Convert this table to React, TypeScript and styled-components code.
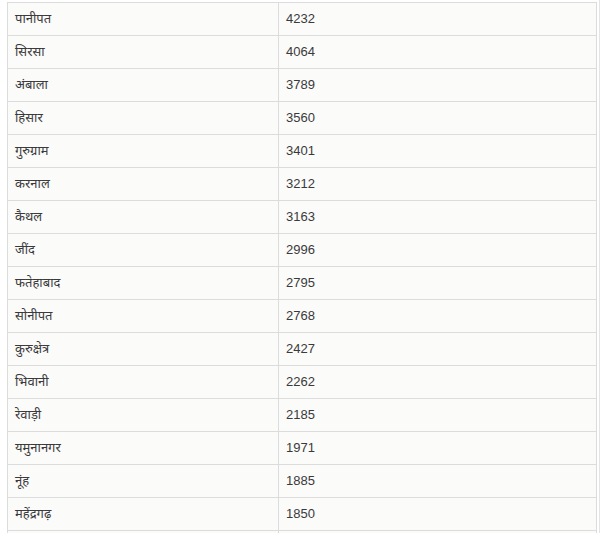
import { FC } from "react";
import styled, { createGlobalStyle } from "styled-components";

const GlobalStyle = createGlobalStyle`
  body {
    margin: 0;
    background: #ffffff;
    overflow: hidden;
  }
`;

const districts: [string, string][] = [
  ["पानीपत", "4232"],
  ["सिरसा", "4064"],
  ["अंबाला", "3789"],
  ["हिसार", "3560"],
  ["गुरुग्राम", "3401"],
  ["करनाल", "3212"],
  ["कैथल", "3163"],
  ["जींद", "2996"],
  ["फतेहाबाद", "2795"],
  ["सोनीपत", "2768"],
  ["कुरुक्षेत्र", "2427"],
  ["भिवानी", "2262"],
  ["रेवाड़ी", "2185"],
  ["यमुनानगर", "1971"],
  ["नूंह", "1885"],
  ["महेंद्रगढ़", "1850"],
  ["", ""],
];

const Wrapper = styled.div`
  padding: 2px 3px 0 7px;
  border-right: 1px solid #e4e4e4;
  width: 600px;
  box-sizing: border-box;
`;

const Table = styled.table`
  width: 590px;
  border-collapse: collapse;
  table-layout: fixed;
  background-color: #fbfbfa;
  font-family: "Liberation Sans", "Noto Sans", "Noto Sans Devanagari", sans-serif;
  font-size: 13px;
  color: #3a3a3a;
`;

const Cell = styled.td<{ $wide?: boolean }>`
  border: 1px solid #dcdcdc;
  height: 33px;
  padding: 0 7px 2px;
  box-sizing: border-box;
  vertical-align: middle;
  font-weight: 400;
  width: ${(p) => (p.$wide ? "271px" : "auto")};
`;

const App: FC = () => {
  return (
    <>
      <GlobalStyle />
      <Wrapper>
        <Table>
          <tbody>
            {districts.map(([name, count], i) => (
              <tr key={i}>
                <Cell $wide>{name}</Cell>
                <Cell>{count}</Cell>
              </tr>
            ))}
          </tbody>
        </Table>
      </Wrapper>
    </>
  );
};

export default App;
